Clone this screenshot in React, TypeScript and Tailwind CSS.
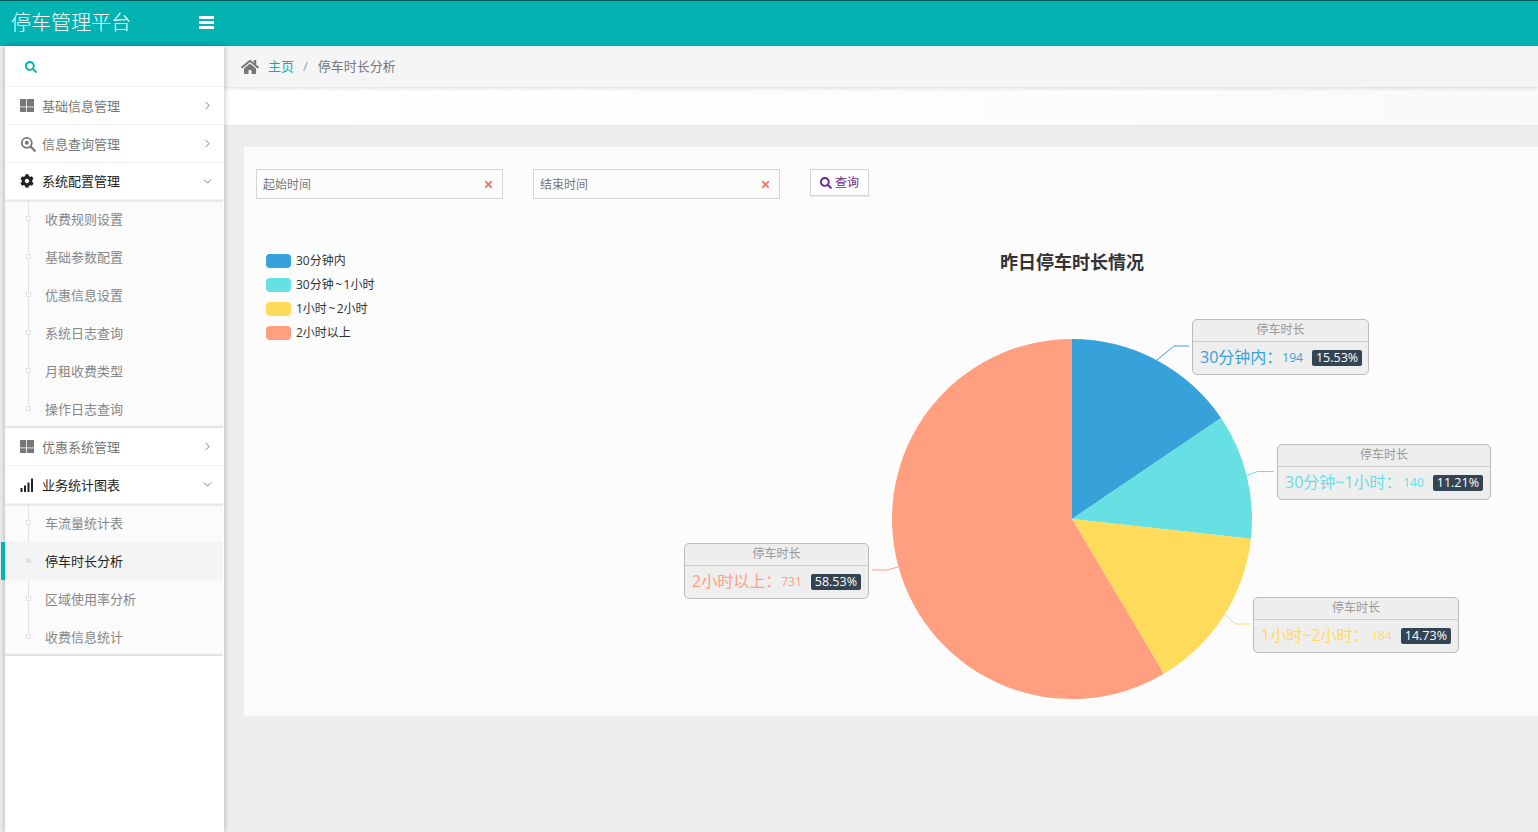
import React from "react";
import { FaSearch, FaHome, FaCog, FaTimes } from "react-icons/fa";
import { LuChevronRight, LuChevronDown } from "react-icons/lu";

const FONT = '"Open Sans","Noto Sans CJK SC",sans-serif';

function ZoomIcon() {
  return (
    <svg width="16" height="16" viewBox="0 0 16 16" className="text-[#777]">
      <circle cx="6.8" cy="6.8" r="5" fill="none" stroke="currentColor" strokeWidth="1.8" />
      <circle cx="6.8" cy="6.8" r="2" fill="currentColor" />
      <path d="M10.6 10.6L14.8 14.8" stroke="currentColor" strokeWidth="2.2" strokeLinecap="round" />
    </svg>
  );
}

function GridIcon() {
  return (
    <svg width="14" height="13" viewBox="0 0 14 13" className="text-[#777]" fill="currentColor">
      <rect x="0" y="0" width="6" height="7.5" />
      <rect x="6.8" y="0" width="7.2" height="7.5" />
      <rect x="0" y="8.3" width="6" height="4.7" />
      <rect x="6.8" y="8.3" width="7.2" height="4.7" />
    </svg>
  );
}

function SignalIcon() {
  return (
    <svg width="14" height="14" viewBox="0 0 14 14" className="text-[#222]" fill="currentColor">
      <rect x="0.5" y="10" width="2" height="4" />
      <rect x="4" y="7.5" width="2" height="6.5" />
      <rect x="7.5" y="4.5" width="2" height="9.5" />
      <rect x="11" y="0.5" width="2" height="13.5" />
    </svg>
  );
}

function BarsIcon() {
  return (
    <svg width="15" height="13" viewBox="0 0 15 13" fill="currentColor">
      <rect x="0" y="0" width="15" height="3" rx="0.5" />
      <rect x="0" y="5" width="15" height="3" rx="0.5" />
      <rect x="0" y="10" width="15" height="3" rx="0.5" />
    </svg>
  );
}

function MenuRow({ icon, label, open, short }: { icon: React.ReactNode; label: string; open?: boolean; short?: boolean }) {
  return (
    <div className={`${short ? "h-[37px]" : "h-[38px]"} flex items-center bg-white border-b border-[#f2f2f2] pl-[15px] pr-[10px] text-[13px] ${open ? "text-[#222]" : "text-[#777]"}`}>
      <span className="w-[22px] flex items-center">{icon}</span>
      <span className="flex-1 pt-[2px]">{label}</span>
      {open ? (
        <LuChevronDown size={13} strokeWidth={1.4} className="text-[#555]" />
      ) : (
        <LuChevronRight size={13} strokeWidth={1.4} className="text-[#555]" />
      )}
    </div>
  );
}

function SubMenu({ items, active }: { items: string[]; active?: string }) {
  return (
    <div className="relative bg-[#fbfbfb] shadow-[inset_0_3px_3px_-2px_rgba(0,0,0,0.12),inset_0_-3px_3px_-2px_rgba(0,0,0,0.18)] mr-[1px]">
      <div className="absolute left-[23px] top-0 bottom-[18px] w-px bg-[#e4e4e4]" />
      {items.map((t) => {
        const on = t === active;
        return (
          <div key={t} className={`relative h-[38px] flex items-center pl-[40px] pt-[1px] text-[13px] ${on ? "bg-[#f4f4f4] text-[#222]" : "text-[#888]"}`}>
            <span className={`absolute left-[21px] top-[16px] w-[5px] h-[5px] border border-[#e2e2e2] ${on ? "bg-[#e2e2e2]" : "bg-[#fbfbfb]"}`} />
            {on && <span className="absolute left-[-4px] top-0 w-[4px] h-full bg-[#03b3b2]" />}
            {t}
          </div>
        );
      })}
    </div>
  );
}

function Sidebar() {
  return (
    <aside className="relative z-10 w-[224px] shrink-0 bg-[#eee] pl-[5px] flex flex-col">
      <div className="flex-1 bg-white shadow-[0_0_6px_rgba(0,0,0,0.28)] flex flex-col">
        <div className="h-[41px] flex items-center pl-[20px] pt-[2px] border-b border-[#f2f2f2] text-[#03b3b2]">
          <FaSearch size={12} />
        </div>
        <MenuRow icon={<GridIcon />} label="基础信息管理" />
        <MenuRow icon={<ZoomIcon />} label="信息查询管理" />
        <MenuRow icon={<FaCog size={14} className="text-[#222]" />} label="系统配置管理" open short />
        <SubMenu items={["收费规则设置", "基础参数配置", "优惠信息设置", "系统日志查询", "月租收费类型", "操作日志查询"]} />
        <MenuRow icon={<GridIcon />} label="优惠系统管理" />
        <MenuRow icon={<SignalIcon />} label="业务统计图表" open />
        <SubMenu items={["车流量统计表", "停车时长分析", "区域使用率分析", "收费信息统计"]} active="停车时长分析" />
      </div>
    </aside>
  );
}

function DateInput({ placeholder }: { placeholder: string }) {
  return (
    <div className="w-[247px] h-[30px] border border-[#d5d5d5] flex items-center justify-between pl-[6px] pr-[8px] text-[12px] text-[#777]">
      <span className="pt-[1px]">{placeholder}</span>
      <FaTimes size={11} className="text-[#e9806e]" />
    </div>
  );
}

const legend: { c: string; a: string; b?: string }[] = [
  { c: "#37a2da", a: "30分钟内" },
  { c: "#67e0e3", a: "30分钟", b: "1小时" },
  { c: "#ffdb5c", a: "1小时", b: "2小时" },
  { c: "#ff9f7f", a: "2小时以上" },
];

function slice(from: number, to: number) {
  const cx = 828, cy = 372, r = 180;
  const pt = (p: number) => {
    const a = (p / 100) * 2 * Math.PI;
    return `${(cx + r * Math.sin(a)).toFixed(2)} ${(cy - r * Math.cos(a)).toFixed(2)}`;
  };
  const large = to - from > 50 ? 1 : 0;
  return `M${cx} ${cy}L${pt(from)}A${r} ${r} 0 ${large} 1 ${pt(to)}Z`;
}

function Callout({ left, top, width, color, name, value, pct }: { left: string; top: string; width: string; color: string; name: string; value: string; pct: string }) {
  return (
    <div className={`absolute ${left} ${top} ${width} h-[56px] bg-[#eee] border border-[#bbb] rounded-[5px] flex flex-col`} style={{ color }}>
      <div className="h-[22px] border-b border-[#ccc] text-center text-[12px] leading-[20px] text-[#999]">停车时长</div>
      <div className="flex-1 flex items-center justify-between pl-[7px] pr-[7px]">
        <span className="text-[16px] whitespace-nowrap pb-[2px]">{name}</span>
        <span className="text-[12px] flex-1 text-right pr-[9px]">{value}</span>
        <span className="h-[16px] px-[4px] bg-[#334455] rounded-[2px] text-white text-[12.5px] leading-[16px]">{pct}</span>
      </div>
    </div>
  );
}

function Chart() {
  return (
    <div className="relative flex-1">
      <svg className="absolute inset-0" width="1294" height="569" viewBox="0 0 1294 569">
        <path d={slice(0, 15.53)} fill="#37a2da" />
        <path d={slice(15.53, 26.74)} fill="#67e0e3" />
        <path d={slice(26.74, 41.47)} fill="#ffdb5c" />
        <path d={slice(41.47, 100)} fill="#ff9f7f" />
        <path d="M913 213L930 199L945 199" fill="none" stroke="#37a2da" />
        <path d="M1003 328L1014 324.5L1030 324.5" fill="none" stroke="#67e0e3" />
        <path d="M978 464L991 477L1006 477" fill="none" stroke="#ffdb5c" />
        <path d="M654 420L643 423L628 423" fill="none" stroke="#ff9f7f" />
      </svg>
      <div className="absolute left-[22px] top-[106px] flex flex-col gap-[9px]">
        {legend.map((l) => (
          <div key={l.a} className="h-[15px] flex items-center gap-[5px] text-[12px] text-[#333]">
            <span className="w-[25px] h-[14px] rounded-[4px]" style={{ background: l.c }} />
            <span>
              {l.a}
              {l.b && <span className="mx-[1.5px]">~</span>}
              {l.b}
            </span>
          </div>
        ))}
      </div>
      <div className="absolute left-[756px] top-[102px] text-[18px] font-bold leading-[26px] text-[#333]">昨日停车时长情况</div>
      <Callout left="left-[948px]" top="top-[172px]" width="w-[177px]" color="#37a2da" name="30分钟内：" value="194" pct="15.53%" />
      <Callout left="left-[1033px]" top="top-[297px]" width="w-[214px]" color="#67e0e3" name="30分钟~1小时：" value="140" pct="11.21%" />
      <Callout left="left-[1009px]" top="top-[450px]" width="w-[206px]" color="#ffdb5c" name="1小时~2小时：" value="184" pct="14.73%" />
      <Callout left="left-[440px]" top="top-[396px]" width="w-[185px]" color="#ff9f7f" name="2小时以上：" value="731" pct="58.53%" />
    </div>
  );
}

export default function App() {
  return (
    <div className="w-[1538px] h-[832px] overflow-hidden flex flex-col bg-[#eee]" style={{ fontFamily: FONT }}>
      <header className="h-[46px] shrink-0 bg-[#03b3b2] border-t border-[#045c5c] flex items-center text-white">
        <div className="w-[224px] pl-[11px] pr-[10px] pb-[2px] flex items-center justify-between">
          <span className="text-[20px] font-light">停车管理平台</span>
          <BarsIcon />
        </div>
      </header>
      <div className="flex-1 flex min-h-0">
        <Sidebar />
        <main className="flex-1 flex flex-col min-w-0">
          <div className="relative h-[41px] shrink-0 bg-[#f5f5f5] shadow-[0_1px_4px_rgba(0,0,0,0.15)] flex items-center pl-[17px] pt-[1px] text-[13px] text-[#777]">
            <FaHome size={18} className="text-[#777] mr-[9px]" />
            <span className="text-[#03b3b2]">主页</span>
            <span className="ml-[9px] mr-[10px] text-[#999]">/</span>
            <span>停车时长分析</span>
          </div>
          <div className="h-[39px] shrink-0 bg-gradient-to-r from-white to-[#fafafa] border-b border-[#e5e5e5]" />
          <div className="flex-1 min-h-0 pt-[21px] pl-[20px]">
            <div className="h-[569px] bg-[#fcfcfc] flex flex-col">
              <div className="relative z-10 h-[52px] shrink-0 pt-[22px] pl-[12px] flex items-start gap-[30px]">
                <DateInput placeholder="起始时间" />
                <DateInput placeholder="结束时间" />
                <button className="w-[59px] h-[27px] pt-[1px] border border-[#d5d5d5] bg-white shadow-[0_1px_1px_rgba(0,0,0,0.08)] text-[12px] text-[#6b2a8c] flex items-center justify-center gap-[3px]">
                  <FaSearch size={12} />
                  查询
                </button>
              </div>
              <div className="relative flex-1 -mt-[52px] flex">
                <Chart />
              </div>
            </div>
          </div>
        </main>
      </div>
    </div>
  );
}
